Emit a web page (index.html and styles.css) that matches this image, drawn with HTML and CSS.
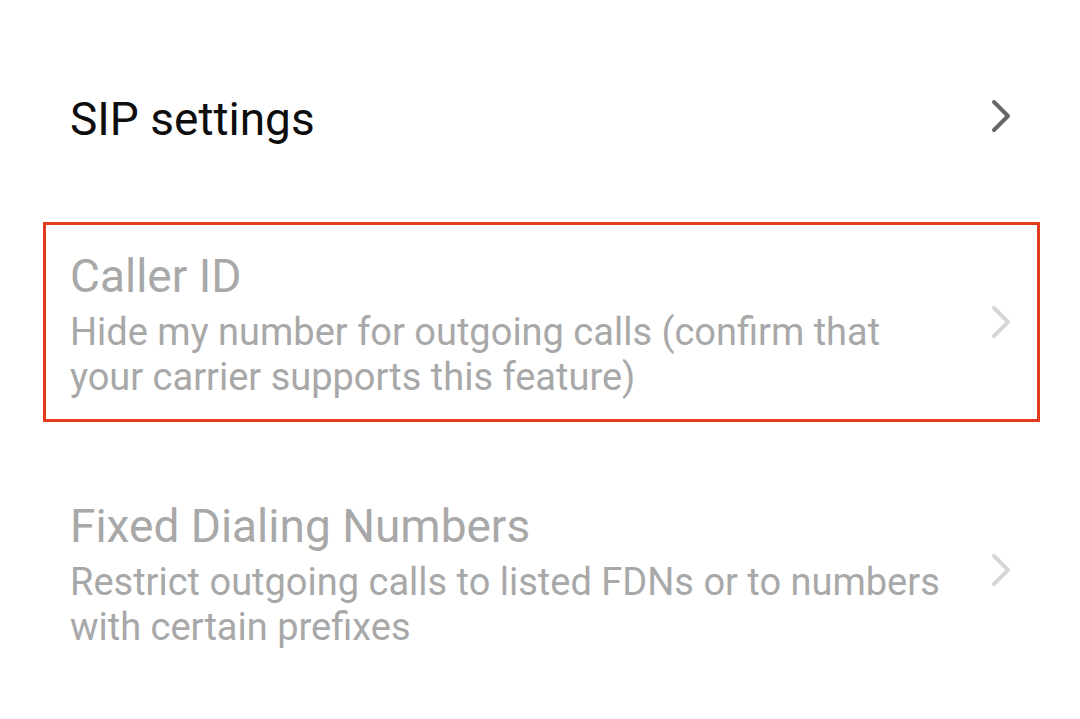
FILE: index.html
```html
<!DOCTYPE html>
<html>
<head>
<meta charset="utf-8">
<link rel="stylesheet" href="styles.css">
</head>
<body>
<div class="list">
  <div class="row row-single">
    <div class="text">
      <div class="title">SIP settings</div>
    </div>
    <svg class="chev" width="24" height="36" viewBox="0 0 24 36"><path d="M4 3 L18 17 L4 31" fill="none" stroke="#666666" stroke-width="4" stroke-linecap="round" stroke-linejoin="round"/></svg>
  </div>
  <div class="row row-boxed disabled">
    <div class="text">
      <div class="title">Caller ID</div>
      <div class="sub">Hide my number for outgoing calls (confirm that your carrier supports this feature)</div>
    </div>
    <svg class="chev" width="24" height="36" viewBox="0 0 24 36"><path d="M4 3 L18 17 L4 31" fill="none" stroke="#d6d6d6" stroke-width="4" stroke-linecap="round" stroke-linejoin="round"/></svg>
  </div>
  <div class="row row-last disabled">
    <div class="text">
      <div class="title">Fixed Dialing Numbers</div>
      <div class="sub">Restrict outgoing calls to listed FDNs or to numbers with certain prefixes</div>
    </div>
    <svg class="chev chev-low" width="24" height="36" viewBox="0 0 24 36"><path d="M4 3 L18 17 L4 31" fill="none" stroke="#d6d6d6" stroke-width="4" stroke-linecap="round" stroke-linejoin="round"/></svg>
  </div>
</div>
</body>
</html>
```
FILE: styles.css
```css
html, body {
  margin: 0;
  padding: 0;
  background: #ffffff;
}
body {
  width: 1080px;
  height: 719px;
  overflow: hidden;
  font-family: Roboto, "Noto Sans", sans-serif;
}
.list {
  display: flex;
  flex-direction: column;
  padding: 92px 0 0 0;
}
.row {
  display: flex;
  align-items: center;
  justify-content: space-between;
  padding: 0 66px 0 70px;
}
.row-single {
  margin-bottom: 76px;
}
.row-boxed {
  margin: 0 40px 77px 43px;
  border: 3px solid #e23b1e;
  padding: 24px 23px 19px 24px;
}
.text {
  display: flex;
  flex-direction: column;
  width: 885px;
}
.title {
  font-size: 46px;
  line-height: 54px;
  color: #0d0d0d;
}
.sub {
  margin-top: 7px;
  font-size: 38px;
  line-height: 45px;
  color: #a8a8a8;
}
.disabled .title {
  color: #a8a8a8;
}
.chev {
  flex: none;
  margin-top: -4px;
}
.chev-low {
  margin-top: -8px;
}
```
